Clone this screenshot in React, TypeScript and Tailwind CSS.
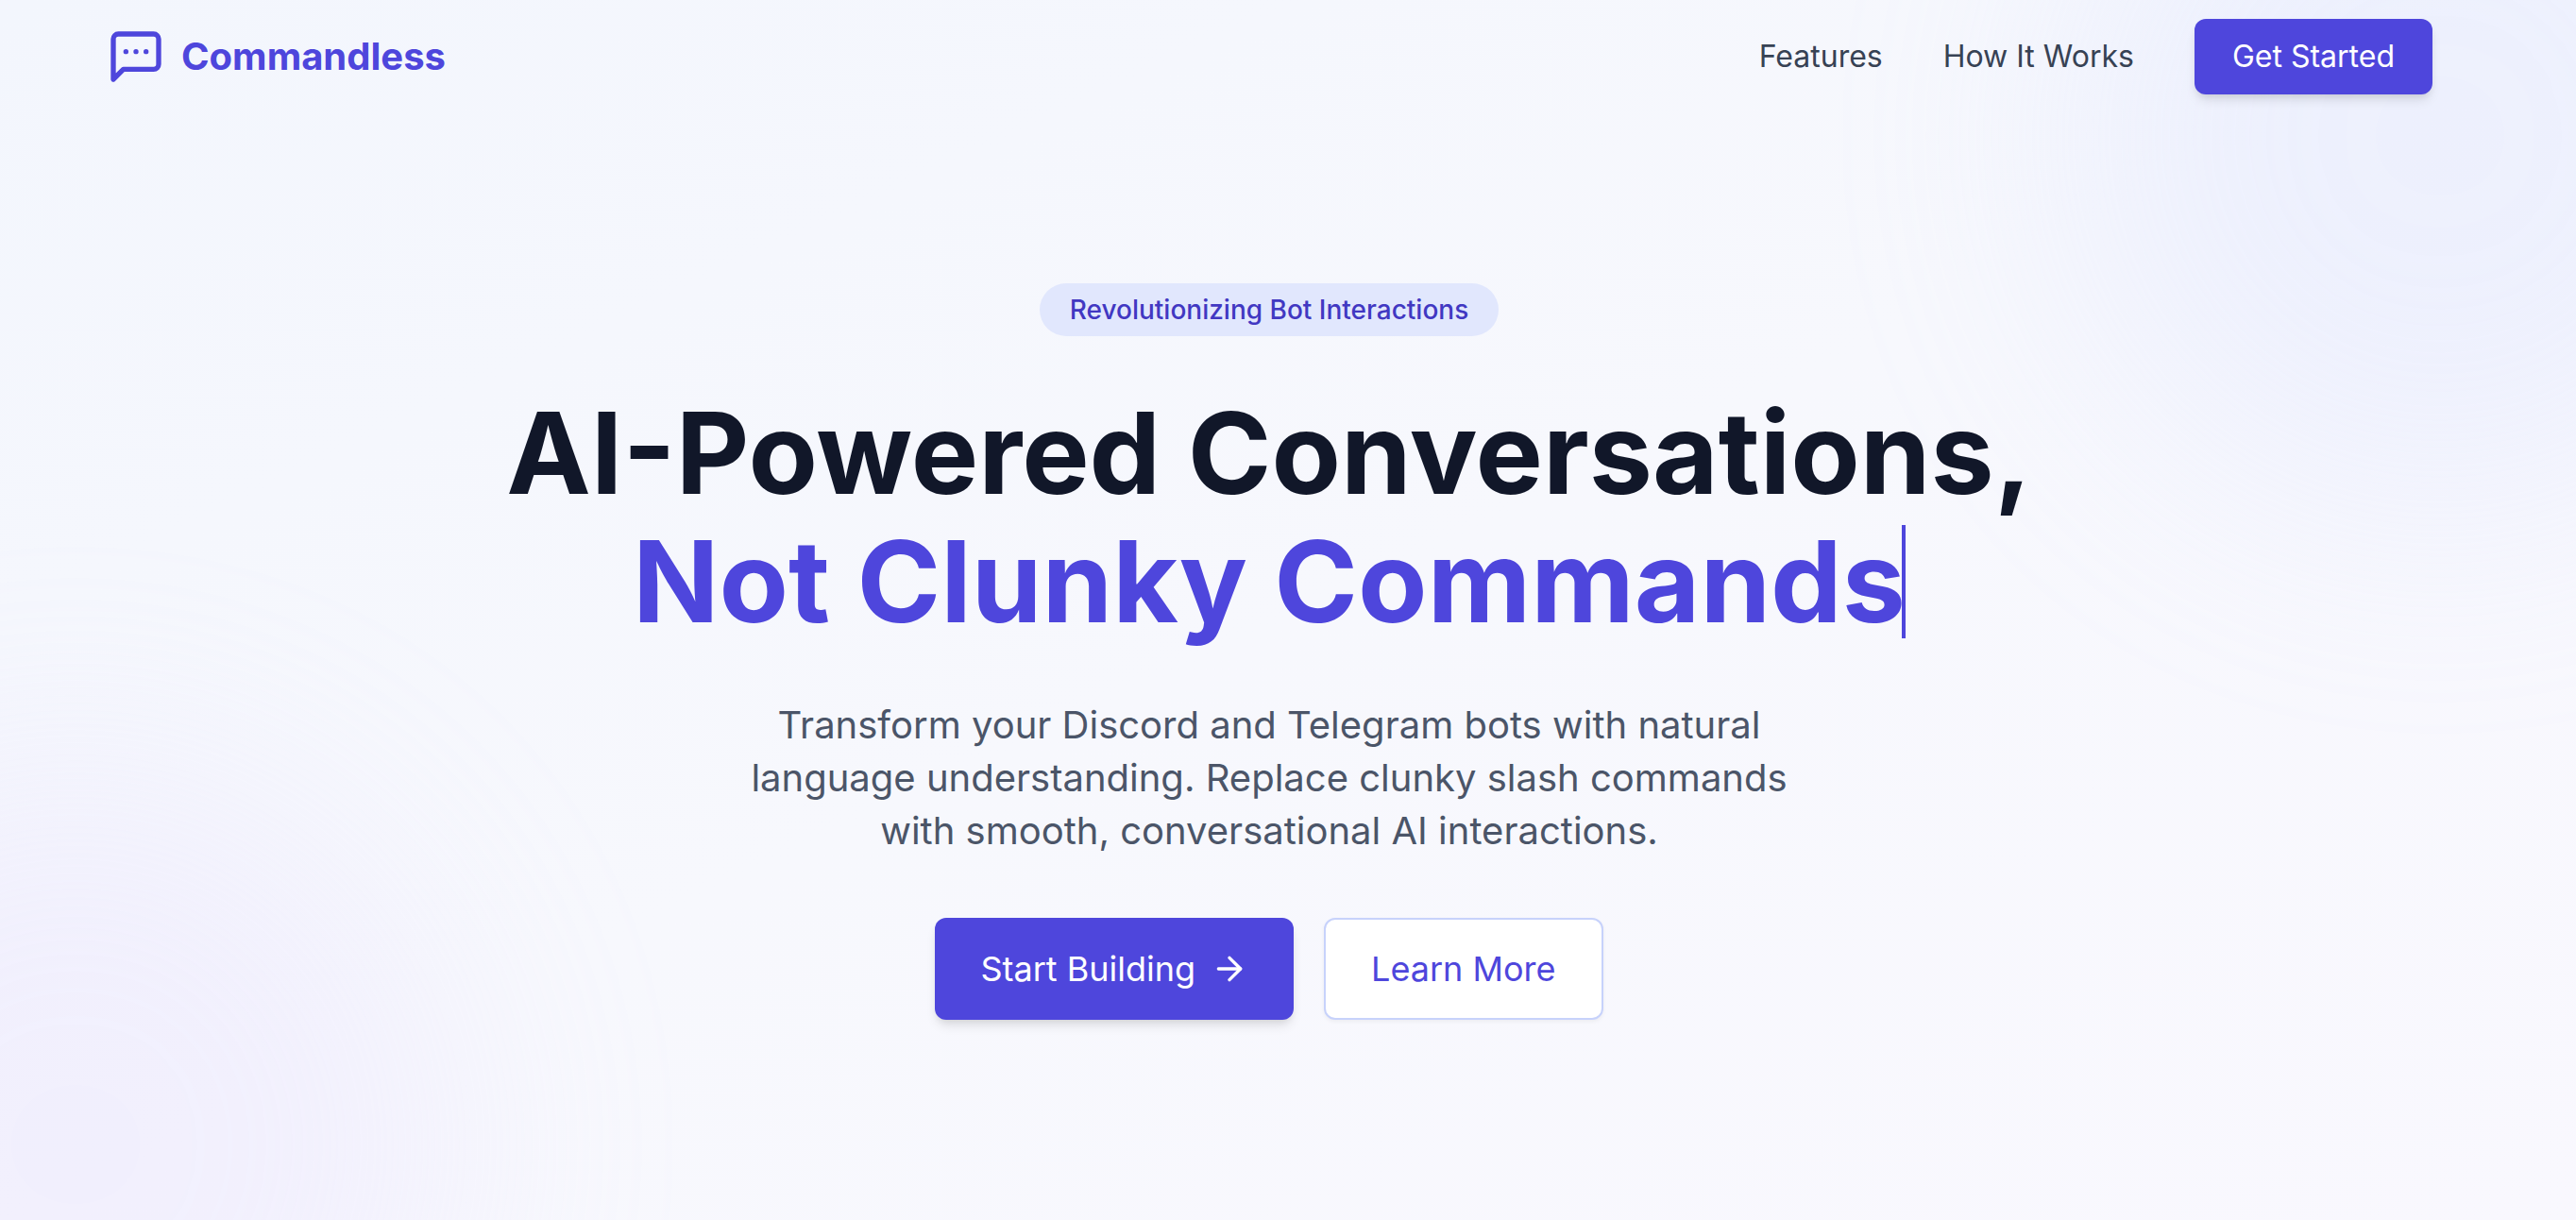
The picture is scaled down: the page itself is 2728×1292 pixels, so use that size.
import React from "react";

function ChatIcon() {
  return (
    <svg
      className="size-16"
      viewBox="0 0 24 24"
      fill="none"
      stroke="currentColor"
      strokeWidth="2"
      strokeLinecap="round"
      strokeLinejoin="round"
      aria-hidden="true"
    >
      <path d="M21 15a2 2 0 0 1-2 2H7l-4 4V5a2 2 0 0 1 2-2h14a2 2 0 0 1 2 2z" />
      <path d="M8 10h.01" />
      <path d="M12 10h.01" />
      <path d="M16 10h.01" />
    </svg>
  );
}

function ArrowIcon() {
  return (
    <svg
      className="size-10"
      viewBox="0 0 24 24"
      fill="none"
      stroke="currentColor"
      strokeWidth="2"
      strokeLinecap="round"
      strokeLinejoin="round"
      aria-hidden="true"
    >
      <path d="M5 12h14" />
      <path d="m12 5 7 7-7 7" />
    </svg>
  );
}

function Header() {
  return (
    <header className="mx-auto flex w-full max-w-[2560px] items-center justify-between px-12 py-5">
      <a href="#" className="flex items-center gap-4 text-[#4e46dc]">
        <ChatIcon />
        <span className="text-[40px] leading-[56px] font-bold">Commandless</span>
      </a>
      <nav className="flex items-center gap-16 text-[32px] leading-[48px]">
        <a href="#features" className="text-[#374254]">
          Features
        </a>
        <a href="#how-it-works" className="text-[#374254]">
          How It Works
        </a>
        <button
          type="button"
          className="rounded-xl bg-[#4e46dc] px-10 py-4 text-white shadow-[0_8px_12px_-2px_rgba(0,0,0,0.1),0_4px_8px_-4px_rgba(0,0,0,0.1)]"
        >
          Get Started
        </button>
      </nav>
    </header>
  );
}

function Hero() {
  return (
    <main className="flex flex-col items-center px-12 pt-[180px] pb-[212px] text-center">
      <span className="rounded-full bg-[#e1e7fd] px-8 py-2 text-[28px] leading-[40px] font-medium text-[#4138c2]">
        Revolutionizing Bot Interactions
      </span>
      <h1 className="mt-16 flex flex-col items-center gap-4 text-[120px] leading-[120px] font-bold text-[#111729]">
        <span>AI-Powered Conversations,</span>
        <span className="relative text-[#4e46dc]">
          Not Clunky Commands
          <span className="absolute inset-y-0 right-0 w-1 bg-[#4e46dc]" aria-hidden="true" />
        </span>
      </h1>
      <p className="mt-16 max-w-[1152px] text-[40px] leading-[56px] text-[#4b5568]">
        Transform your Discord and Telegram bots with natural language understanding. Replace clunky
        slash commands with smooth, conversational AI interactions.
      </p>
      <div className="mt-16 flex gap-8 text-[36px] leading-[56px]">
        <button
          type="button"
          className="flex items-center gap-4 rounded-xl bg-[#4e46dc] px-12 py-6 text-white shadow-[0_8px_12px_-2px_rgba(0,0,0,0.1),0_4px_8px_-4px_rgba(0,0,0,0.1)]"
        >
          Start Building
          <ArrowIcon />
        </button>
        <button
          type="button"
          className="rounded-xl border-2 border-[#c7d2fb] bg-white px-12 py-6 text-[#4e46dc] shadow-[0_2px_4px_rgba(0,0,0,0.05)]"
        >
          Learn More
        </button>
      </div>
    </main>
  );
}

export default function App() {
  return (
    <div className="relative isolate min-h-screen overflow-hidden bg-linear-to-br from-[#f3f6fd] via-[#f7f8fd] to-[#f9f8fe] pr-10 font-['Inter',sans-serif]">
      <div className="absolute -top-64 -right-64 -z-10 size-[800px] rounded-full bg-[#c7d2fe] opacity-20 blur-[128px]" />
      <div className="absolute -bottom-80 -left-80 -z-10 size-[800px] rounded-full bg-[#ddd0fe] opacity-20 blur-[128px]" />
      <Header />
      <Hero />
    </div>
  );
}
